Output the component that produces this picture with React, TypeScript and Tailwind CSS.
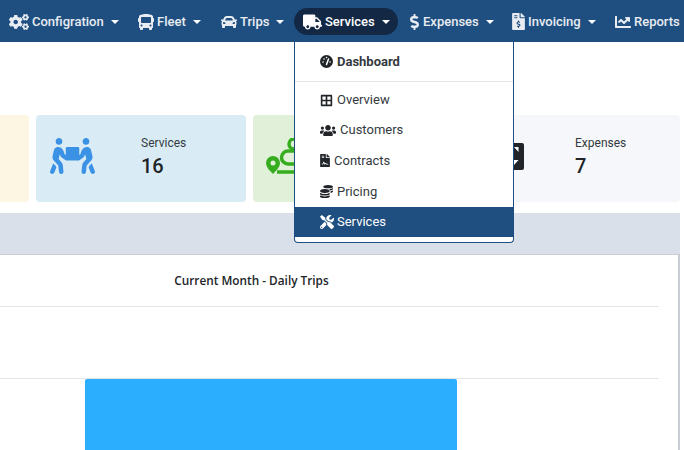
import {
  FaCogs,
  FaBus,
  FaCar,
  FaTruck,
  FaDollarSign,
  FaFileInvoiceDollar,
  FaChartLine,
  FaUsers,
  FaFileContract,
  FaCoins,
  FaTools,
  FaPeopleCarry,
  FaBorderAll,
} from "react-icons/fa";

const NAV_ITEMS = [
  { label: "Configration", icon: <FaCogs className="w-[20px] h-[16px]" />, caret: true, w: "w-[129px] pl-[9px]" },
  { label: "Fleet", icon: <FaBus className="w-[16px] h-[16px]" />, caret: true, w: "w-[83px] pl-[9px]" },
  { label: "Trips", icon: <FaCar className="w-[16px] h-[16px]" />, caret: true, w: "w-[82px] pl-[9px]" },
  { label: "Services", icon: <FaTruck className="w-[19px] h-[16px]" />, caret: true, w: "w-[104px] pl-[9px]", active: true },
  { label: "Expenses", icon: <FaDollarSign className="w-[11px] h-[16px]" />, caret: true, w: "w-[105px] pl-[11px]" },
  { label: "Invoicing", icon: <FaFileInvoiceDollar className="w-[13px] h-[17px]" />, caret: true, w: "w-[103px] pl-[9px]" },
  { label: "Reports", icon: <FaChartLine className="w-[16px] h-[16px]" />, caret: false, w: "w-[78px] pl-[9px]" },
];

const Caret = () => (
  <span className="ml-[4px] w-0 h-0 border-x-[4px] border-x-transparent border-t-[4px] border-t-white" />
);

const App = () => {
  return (
    <div className="relative w-[684px] h-[450px] overflow-hidden bg-white font-['Roboto',sans-serif]">
      {/* Top nav */}
      <nav className="h-[42px] bg-[#1f4e80] flex items-center pt-[1px] text-[13px] font-medium text-white/90 whitespace-nowrap">
        {NAV_ITEMS.map((item) => (
          <div
            key={item.label}
            className={`${item.w} h-[27px] shrink-0 flex items-center gap-[3px] rounded-full ${
              item.active ? "bg-[#122844] text-white" : ""
            }`}
          >
            {item.icon}
            <span>{item.label}</span>
            {item.caret && <Caret />}
          </div>
        ))}
      </nav>

      {/* Stat cards */}
      <div className="mt-[73px] flex justify-end gap-[7px] pr-[4px] h-[87px]">
        <div className="w-[210px] shrink-0 rounded-[4px] bg-[#fdf6e3]" />
        <div className="w-[210px] shrink-0 rounded-[4px] bg-[#d9ecf6] flex items-center pl-[14px] text-[#212529]">
          <FaPeopleCarry className="w-[45px] h-[36px] mb-[5px] text-[#3b92e4]" />
          <div className="ml-[46px] mb-[4px]">
            <div className="text-[12px] leading-[16px] text-[#343a40]">Services</div>
            <div className="text-[20px] leading-[26px] font-medium mt-[2px]">16</div>
          </div>
        </div>
        <div className="w-[210px] shrink-0 rounded-[4px] bg-[#e0f0d9] flex items-start pl-[13px] pt-[23px]">
          <svg viewBox="0 0 40 40" className="w-[40px] h-[40px]">
            <path
              fill="#36ad1f"
              fillRule="evenodd"
              d="M7 18a7 7 0 0 1 7 7c0 4-4 8-7 11-3-3-7-7-7-11a7 7 0 0 1 7-7zm0 4.500a2.500 2.500 0 1 0 0 5 2.500 2.500 0 0 0 0-5z"
            />
            <path
              fill="none"
              stroke="#36ad1f"
              strokeWidth="3.5"
              d="M11 34h29M40 26H22a6 6 0 0 1 0-13h18"
            />
            <circle cx="28" cy="6" r="5" fill="none" stroke="#36ad1f" strokeWidth="3.5" />
          </svg>
        </div>
        <div className="w-[210px] shrink-0 rounded-[4px] bg-[#f5f7fa] flex items-center pl-[34px] text-[#212529]">
          <svg viewBox="0 0 20 27" className="w-[20px] h-[27px] mb-[5px]">
            <rect width="20" height="27" rx="2" fill="#212529" />
            <path fill="#ffffff" d="M10 4h4.500v5zM10 17h4.500l-4.500 5z" />
          </svg>
          <div className="ml-[51px] mb-[4px]">
            <div className="text-[12px] leading-[16px] text-[#343a40]">Expenses</div>
            <div className="text-[20px] leading-[26px] font-medium mt-[2px]">7</div>
          </div>
        </div>
      </div>

      {/* Chart panel */}
      <div className="mt-[11px] mr-[4px]">
        <div className="h-[42px] bg-[#d9e0e9] border-b border-[#c9ced6]" />
        <div className="border-r-2 border-[#c9ced6] h-[195px]">
          <div className="mr-[19px]">
            <div className="h-[52px] border-b border-[#e3e4e6] pr-[156px] flex items-center justify-center text-[11.8px] font-semibold text-[#212529] font-['Open_Sans',sans-serif]">
              Current Month - Daily Trips
            </div>
            <div className="h-[72px] border-b border-[#e3e4e6]" />
            <div className="pl-[85px]">
              <div className="w-[372px] h-[71px] bg-[#2caeff] rounded-t-[2px]" />
            </div>
          </div>
        </div>
      </div>

      {/* Services dropdown */}
      <div className="absolute left-[294px] top-[42px] w-[220px] h-[201px] bg-white border border-[#1f4e80] border-t-0 rounded-b-[4px] text-[13px] text-[#343a40]">
        <div className="h-[39px] flex items-center pl-[25px] font-bold gap-[4px]">
          <svg viewBox="0 0 13 13" className="w-[13px] h-[13px]">
            <circle cx="6.500" cy="6.500" r="6.500" fill="#212529" />
            <path
              stroke="#ffffff"
              strokeWidth="1.500"
              strokeLinecap="round"
              d="M6.500 9.500 8.500 4M3 7h.100M4 4h.100M6.500 2.500h.100M10 7h.100"
            />
          </svg>
          Dashboard
        </div>
        <div className="border-t border-[#e3e4e6] pt-[3px]">
          <div className="h-[30px] flex items-center pl-[25px] gap-[4px]">
            <FaBorderAll className="w-[13px] h-[13px] text-[#212529]" />
            Overview
          </div>
          <div className="h-[30px] flex items-center pl-[25px] gap-[4px]">
            <FaUsers className="w-[16px] h-[13px] text-[#212529]" />
            Customers
          </div>
          <div className="h-[31px] flex items-center pl-[25px] gap-[4px]">
            <FaFileContract className="w-[10px] h-[13px] text-[#212529]" />
            Contracts
          </div>
          <div className="h-[31px] flex items-center pl-[25px] gap-[4px]">
            <FaCoins className="w-[13px] h-[13px] text-[#212529]" />
            Pricing
          </div>
          <div className="h-[30px] flex items-center pl-[25px] gap-[3px] bg-[#1f4e80] text-white">
            <FaTools className="w-[14px] h-[14px]" />
            Services
          </div>
        </div>
      </div>
    </div>
  );
};

export default App;
